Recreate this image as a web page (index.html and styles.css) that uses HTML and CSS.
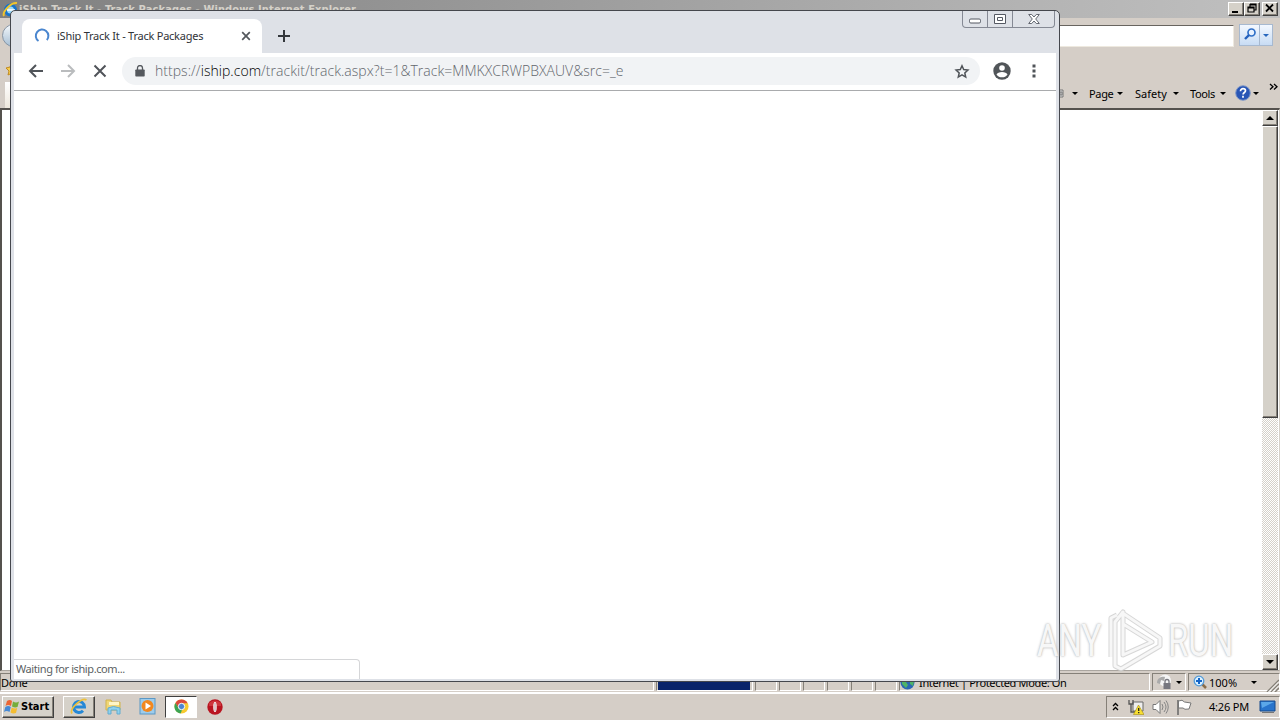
FILE: index.html
```html
<!DOCTYPE html>
<html lang="en">
<head>
  <meta charset="UTF-8" />
  <title>iShip Track It - Track Packages</title>
  <link rel="stylesheet" href="styles.css">
</head>
<body>
  <div class="desktop">

    <!-- Internet Explorer -->
    <div class="ie">
      <div class="ie-title">
        <svg class="ie-logo" width="17" height="17" viewBox="0 0 17 17"><circle cx="8.500" cy="9" r="5" fill="#9bd7f7" stroke="#1673cb" stroke-width="3"/><path d="M5 9h8" stroke="#fff" stroke-width="1.500"/><path d="M2 15C0 11 9 1 15 2" fill="none" stroke="#f0c52c" stroke-width="2"/></svg>
        <span class="ie-caption">iShip Track It - Track Packages - Windows Internet Explorer</span>
        <div class="classic-buttons">
          <span class="raised"><svg width="14" height="11" viewBox="0 0 14 11"><path d="M3 8h6v2H3z"/></svg></span>
          <span class="raised"><svg width="14" height="11" viewBox="0 0 14 11"><path d="M5 1h6v6H9M5 2h6M5 1v3M3 4h6v5H3zM3 5h6" fill="none" stroke="#000" stroke-width="1.2"/></svg></span>
          <span class="raised close"><svg width="14" height="11" viewBox="0 0 14 11"><path d="M3 1.500l7 7M10 1.500l-7 7" stroke="#000" stroke-width="1.8"/></svg></span>
        </div>
      </div>
      <div class="ie-nav">
        <span class="ie-back"></span>
        <span class="ie-address"></span>
        <div class="ie-search">
          <span><svg width="21" height="19" viewBox="0 0 21 19"><circle cx="11.500" cy="7.500" r="3.500" fill="#e8f2ff" stroke="#3070c8" stroke-width="1.700"/><path d="M9 10l-4 4" stroke="#2460bd" stroke-width="2.400"/></svg></span>
          <span><i class="caret blue"></i></span>
        </div>
      </div>
      <div class="ie-commands">
        <div class="ie-side">
          <svg width="12" height="14" viewBox="0 0 12 14"><path d="M7 1l2 4 4 0-3 4 1 4-4-2-4 2 1-4-3-3 4-1z" fill="#f7ce4d" stroke="#c18a20"/></svg>
          <span class="ie-tab"></span>
        </div>
        <div class="ie-menu">
          <svg class="printer" width="8" height="12" viewBox="0 0 8 12"><path d="M1 3h5v7H0M3 5h2v3H3z" fill="#ddd" stroke="#777"/></svg>
          <i class="caret"></i>
          <span class="item page-item">Page</span><i class="caret"></i>
          <span class="item safety">Safety</span><i class="caret"></i>
          <span class="item tools">Tools</span><i class="caret"></i>
          <svg class="help" width="16" height="16" viewBox="0 0 16 16"><circle cx="8" cy="8" r="7.300" fill="#2855b5" stroke="#8199c8"/><path d="M5.500 6.200c0-3.500 5-3 5-.4 0 1.800-2.400 1.700-2.400 3.700M8 10.800v2" fill="none" stroke="#fff" stroke-width="1.700"/></svg><i class="caret"></i>
          <svg class="more" width="9" height="8" viewBox="0 0 9 8"><path d="M1 1l3 2.700L1 6.500M5 1l3 2.700L5 6.500" fill="none" stroke="#000" stroke-width="1.300"/></svg>
        </div>
      </div>
      <div class="ie-view">
        <div class="ie-page"></div>
        <div class="scrollbar">
          <span class="raised arrow"><i class="tri up"></i></span>
          <span class="raised thumb"></span>
          <span class="track"></span>
          <span class="raised arrow"><i class="tri"></i></span>
        </div>
      </div>
      <div class="ie-status">
        <span class="pane done">Done</span>
        <span class="pane progress"><b></b></span>
        <span class="pane"></span>
        <span class="pane"></span>
        <span class="pane"></span>
        <span class="pane"></span>
        <span class="pane"></span>
        <span class="pane"></span>
        <span class="pane zone">
          <svg width="15" height="15" viewBox="0 0 15 15"><circle cx="7.500" cy="7.500" r="7" fill="#2b68b4"/><path d="M2 4l5-3 2 3-3 3 2 3-2 3-4-4zM10 5l4 1-1 5-3-2z" fill="#50b466"/></svg>
          <span>Internet | Protected Mode: On</span>
        </span>
        <span class="pane privacy">
          <svg width="19" height="16" viewBox="0 0 19 16"><circle cx="10" cy="6.500" r="6" fill="#f5f5f5"/><path d="M2 9c0-6 6-7 8-6l-1 4-3-1-1 4z" fill="#aaa"/><path d="M8.500 9h7v6h-7z" fill="#77777f"/><path d="M10 9V7.500a2 2 0 0 1 4 0V9" fill="none" stroke="#77777f" stroke-width="1.300"/></svg>
          <i class="caret"></i>
        </span>
        <span class="pane zoom">
          <svg width="14" height="15" viewBox="0 0 14 15"><path d="M9 9l4 4" stroke="#8b6c48" stroke-width="2.500"/><circle cx="6" cy="6" r="4.800" fill="#d9f0ff" stroke="#559bd7" stroke-width="1.300"/><path d="M6 3v6M3 6h6" stroke="#1565c8" stroke-width="2"/></svg>
          <span>100%</span>
          <i class="caret"></i>
          <svg class="grip" width="13" height="13" viewBox="0 0 13 13"><path d="M1 13L13 1M5 13l8-8M9 13l4-4" stroke="#858078" stroke-width="1.500"/><path d="M2.500 13L13 2.500M6.500 13L13 6.500" stroke="#fff"/></svg>
        </span>
      </div>
    </div>

    <!-- Chrome -->
    <div class="chrome">
      <div class="tabstrip">
        <div class="tab">
          <svg width="16" height="16" viewBox="0 0 16 16"><path d="M4.500 13A6.300 6.300 0 1 1 12.800 12" fill="none" stroke="#4a86cf" stroke-width="2"/></svg>
          <span class="tab-title">iShip Track It - Track Packages</span>
          <svg class="tab-close" width="10" height="10" viewBox="0 0 10 10"><path d="M1.200 1.200l7.600 7.600M8.800 1.200L1.200 8.800" stroke="#53575c" stroke-width="1.700"/></svg>
        </div>
        <svg class="new-tab" width="12" height="12" viewBox="0 0 12 12"><path d="M6 0v12M0 6h12" stroke="#34373c" stroke-width="2"/></svg>
        <div class="controls">
          <span class="min"><svg width="12" height="6" viewBox="0 0 12 6"><rect x=".5" y="1" width="11" height="4" rx="1.300" fill="#fff" stroke="#555963"/></svg></span>
          <span><svg width="12" height="10" viewBox="0 0 12 10"><path d="M.5.500h11v9H.500zM3.500 3.500h5v3h-5z" fill="#fff" stroke="#555963"/></svg></span>
          <span><svg width="12" height="10" viewBox="0 0 12 10"><path d="M.7.500h3L6 3 8.300.500h3L7.700 5l3.600 4.500h-3L6 7 3.700 9.500h-3L4.300 5z" fill="#fff" stroke="#555963" stroke-width=".9"/></svg></span>
        </div>
      </div>
      <div class="toolbar">
        <svg class="back" width="16" height="14" viewBox="0 0 16 14"><path d="M15 7H2M8 1L2 7l6 6" fill="none" stroke="#505459" stroke-width="2"/></svg>
        <svg class="forward" width="16" height="14" viewBox="0 0 16 14"><path d="M1 7h13M8 1l6 6-6 6" fill="none" stroke="#babcbe" stroke-width="2"/></svg>
        <svg class="stop" width="14" height="14" viewBox="0 0 14 14"><path d="M1.500 1.500l11 11M12.500 1.500l-11 11" stroke="#505459" stroke-width="2"/></svg>
        <div class="omnibox">
          <svg width="10" height="12" viewBox="0 0 10 12"><path d="M1 4.500h8q.7 0 .7.700v5.600q0 .7-.7.700H1q-.7 0-.7-.7V5.200q0-.7.700-.7z" fill="#55595e"/><path d="M2.500 5V3a2.500 2.500 0 0 1 5 0v2" fill="none" stroke="#55595e" stroke-width="1.300"/></svg>
          <div class="url"><span class="scheme">https://</span><span class="host">iship.com</span><span class="path">/trackit/track.aspx?t=1&amp;Track=MMKXCRWPBXAUV&amp;src=_e</span></div>
          <svg class="star" width="16" height="15" viewBox="0 0 16 15"><path d="M8 1.800l1.700 3.800 4.200.4L10.800 8.900l.9 4.200L8 10.900l-3.700 2.200.9-4.200L2.100 6l4.200-.4z" fill="none" stroke="#505459" stroke-width="1.500"/></svg>
        </div>
        <svg class="profile" width="18" height="18" viewBox="0 0 18 18"><circle cx="9" cy="9" r="8.700" fill="#515559"/><circle cx="9" cy="6" r="2.800" fill="#fff"/><path d="M3.500 12.500c1-3.500 10-3.500 11 0-2.500 3.800-8.500 3.800-11 0z" fill="#fff"/></svg>
        <svg class="dots" width="4" height="14" viewBox="0 0 4 14"><path d="M.5.500h3v3h-3zM.5 5.500h3v3h-3zM.5 10.500h3v3h-3z" fill="#505459"/></svg>
      </div>
      <div class="page">
        <div class="bubble"><span>Waiting for iship.com...</span></div>
      </div>
    </div>

    <div class="taskbar">
      <div class="start raised">
        <svg width="17" height="16" viewBox="0 0 17 16"><path d="M3 2q3-2 5 0L7 7Q4 5 1.500 7z" fill="#eb6534"/><path d="M9 2.500q3 2 6 0L13.500 8Q11 9 8 7.500z" fill="#75ad3b"/><path d="M1.300 8q3-2 5.500 0L5.500 13q-3-2-5.500 0z" fill="#4689d5"/><path d="M7.700 8.500q3 1.500 5.500.500L12 14q-3 1-5.500-.500z" fill="#f4bd32"/></svg>
        <span>Start</span>
      </div>
      <div class="task raised">
        <svg width="18" height="17" viewBox="0 0 18 17"><path d="M4 9h10.500A5.500 5.500 0 1 0 13 12.800" fill="none" stroke="#2588d6" stroke-width="3"/><path d="M2 15.500C-1 11 12-1 16.500 2" fill="none" stroke="#edc03c" stroke-width="1.700"/></svg>
      </div>
      <div class="task">
        <svg width="17" height="17" viewBox="0 0 17 17"><path d="M1 2h5l1 2h8v8H1z" fill="#efd677" stroke="#d1b34c"/><path d="M4 4h10v3H4z" fill="#fff6c6"/><path d="M3 16v-6q5-3 12 0v6h-3v-4H6v4z" fill="#8ed2ee" stroke="#63abd0"/></svg>
      </div>
      <div class="task">
        <svg width="17" height="17" viewBox="0 0 17 17"><rect x="1" y=".5" width="15" height="15.500" fill="#9dccec" stroke="#5b98c5"/><circle cx="8.500" cy="8" r="6" fill="#f18820"/><path d="M6.500 4.500l5.500 3.500-5.500 3.500z" fill="#fff"/></svg>
      </div>
      <div class="task active">
        <svg width="15" height="15" viewBox="0 0 16 16"><circle cx="8" cy="8" r="7.500" fill="#f7ca30"/><path d="M1.500 4.200A7.500 7.500 0 0 1 14.500 4.500H8L5 10z" fill="#dc4a3d"/><path d="M1.500 4.200L5.300 10 9 11 7 15.500A7.500 7.500 0 0 1 1.500 4.200z" fill="#3ca454"/><circle cx="8" cy="8" r="3.400" fill="#4d84d2" stroke="#fff"/></svg>
      </div>
      <div class="task">
        <svg width="16" height="16" viewBox="0 0 16 16"><circle cx="8" cy="8" r="7.700" fill="#b91420"/><path d="M2 4q6-5 12 0v3H2z" fill="#dc4d52" opacity=".6"/><ellipse cx="8" cy="8" rx="1.700" ry="5" fill="#fff"/><path d="M8 4v8" stroke="#b98f92"/></svg>
      </div>
      <div class="tray">
        <svg class="expand" width="7" height="10" viewBox="0 0 7 10"><path d="M1 4l2.500-2.500L6 4M1 8l2.500-2.500L6 8" fill="none" stroke="#000" stroke-width="1.300"/></svg>
        <svg class="network" width="16" height="16" viewBox="0 0 16 16"><path d="M5 3h10v9H5z" fill="#eee" stroke="#696969"/><path d="M1 1v4h4V1M3 5v8h4" fill="none" stroke="#555" stroke-width="1.300"/><path d="M10.500 6L16 15.500H5.500z" fill="#f8df31" stroke="#a58c15" stroke-width=".6"/><path d="M10.700 9v3M10.700 13v1.300" stroke="#222" stroke-width="1.300"/></svg>
        <svg class="sound" width="17" height="16" viewBox="0 0 17 16"><path d="M1 5.500h3l4-4v13l-4-4H1z" fill="#fff" stroke="#777"/><path d="M10 5q2 3 0 6M12 3q4 5 0 10M14 1.500q4.500 6.500 0 13" fill="none" stroke="#858585"/></svg>
        <svg class="flag" width="17" height="16" viewBox="0 0 17 16"><path d="M2 1v15" stroke="#666" stroke-width="1.500"/><path d="M2.500 2q4-2 6 1l6.500 1-2 6q-5 1-6-1H2.500z" fill="#fff" stroke="#777"/></svg>
        <span class="clock">4:26 PM</span>
        <svg class="show" width="17" height="14" viewBox="0 0 17 14"><path d="M1 1h15v10H1z" fill="#2874cc" stroke="#174b8c"/><path d="M2 2h13L3 8z" fill="#5ba7e9"/><path d="M3 12.500h12" stroke="#777"/></svg>
      </div>
    </div>

    <div class="watermark">
      <span class="any">ANY</span>
      <svg width="58" height="64" viewBox="0 0 58 64"><path d="M4 48V9l6-3M14 3l39 26v8L14 60l-6-3V13l8-10v43l29-13-29-18" fill="none" stroke="#cecece" stroke-width="5" stroke-linejoin="round"/><path d="M4 48V9l6-3M14 3l39 26v8L14 60l-6-3V13l8-10v43l29-13-29-18" fill="none" stroke="#f6f6f6" stroke-width="3" stroke-linejoin="round"/></svg>
      <span class="run">RUN</span>
    </div>
  </div>
</body>
</html>
```

FILE: styles.css
```css
* {
  box-sizing: border-box;
}
body {
  margin: 0;
  font-family: "Noto Sans", sans-serif;
  font-size: 11px;
  color: #000;
}
svg {
  display: block;
  flex: none;
}
.desktop {
  position: relative;
  width: 1280px;
  height: 720px;
  overflow: hidden;
  background: #d5cec7;
  display: flex;
  flex-direction: column;
}

/* shared classic widgets */
.raised {
  background: #d5d1c9;
  border: 1px solid;
  border-color: #fff #404040 #404040 #fff;
  box-shadow: inset -1px -1px #858078;
}
.caret {
  flex: none;
  border: 3px solid transparent;
  border-top-color: #000;
  border-bottom: 0;
}
.caret.blue {
  border-top-color: #2767bd;
}
.tri {
  border: 4px solid transparent;
  border-top-color: #000;
  border-bottom: 0;
}
.tri.up {
  border: 4px solid transparent;
  border-bottom-color: #000;
  border-top: 0;
}

/* internet explorer */
.ie {
  height: 693px;
  display: flex;
  flex-direction: column;
}
.ie-title {
  height: 18px;
  display: flex;
  align-items: center;
  padding: 0 2px;
  background: linear-gradient(90deg, #808080, #c0c0c0);
}
.ie-caption {
  flex: 1;
  font-weight: bold;
  font-family: "DejaVu Sans Condensed", "DejaVu Sans", sans-serif;
  font-stretch: condensed;
  font-size: 11px;
  letter-spacing: 0.12px;
  color: #d5d1c9;
}
.classic-buttons {
  display: flex;
}
.classic-buttons span {
  width: 16px;
  height: 14px;
}
.classic-buttons .close {
  margin-left: 2px;
}
.ie-nav {
  height: 34px;
  padding: 6px 7px 0 2px;
  display: flex;
}
.ie-back {
  width: 23px;
  height: 23px;
  border: 1px solid #8795a5;
  border-radius: 50%;
  background: linear-gradient(#f4f8fb, #a7bfd4);
}
.ie-address {
  flex: 1;
  height: 22px;
  margin: 1px 5px 0 0;
  background: #fff;
  border: 1px solid #eee9df;
  border-top-color: #68645f;
}
.ie-search {
  display: flex;
  width: 34px;
  height: 22px;
  border: 1px solid #a7b9d0;
  background: linear-gradient(#f3f8ff, #c8dcf4);
}
.ie-search span:first-child {
  width: 20px;
  border-right: 1px solid #a7b9d0;
}
.ie-search span:last-child {
  flex: 1;
  display: flex;
  align-items: center;
  justify-content: center;
}
.ie-commands {
  height: 56px;
  padding: 10px 4px 0 5px;
  display: flex;
  justify-content: space-between;
}
.ie-side {
  display: flex;
  flex-direction: column;
  justify-content: space-between;
}
.ie-tab {
  width: 60px;
  height: 26px;
  background: linear-gradient(#fff, #eee8dd);
}
.ie-menu {
  width: 219px;
  height: 22px;
  margin-top: 20px;
  display: flex;
  align-items: center;
}
.ie-menu .printer {
  margin-right: 7px;
}
.item {
  flex: none;
  margin-right: 5px;
  white-space: nowrap;
}
.page-item {
  width: 23px;
  margin-left: 11px;
  letter-spacing: -0.35px;
}
.safety {
  width: 33px;
  margin-left: 12px;
}
.tools {
  width: 25px;
  margin-left: 11px;
  letter-spacing: -0.35px;
}
.help {
  margin: 0 2px 0 9px;
}
.more {
  margin: -12px 0 0 10px;
}
.ie-view {
  height: 563px;
  display: flex;
  padding-right: 1px;
  border: 1px solid #d5d1c9;
  border-top: 2px solid #55524e;
  border-left: 2px solid #55524e;
  border-bottom-color: #aaa59f;
  background: #fff;
}
.ie-page {
  flex: 1;
}
.scrollbar {
  width: 16px;
  display: flex;
  flex-direction: column;
}
.arrow {
  height: 16px;
  display: flex;
  align-items: center;
  justify-content: center;
}
.thumb {
  height: 292px;
}
.track {
  flex: 1;
  background: repeating-conic-gradient(#d5d1c9 0 25%, #fff 0 50%) 0 0 / 2px 2px;
}
.ie-status {
  height: 22px;
  padding: 2px 0 1px;
  display: flex;
  gap: 2px;
  border-bottom: 1px solid #fff;
}
.pane {
  flex: none;
  width: 22px;
  border: 1px solid #fff;
  border-top-color: #858078;
  border-left-color: #858078;
  display: flex;
  align-items: center;
  white-space: nowrap;
}
.done {
  width: 654px;
  letter-spacing: -0.3px;
}
.progress {
  width: 97px;
  padding: 0 1px;
}
.progress b {
  width: 92px;
  height: 15px;
  background: #0a246a;
}
.zone {
  flex: 1;
  gap: 4px;
  letter-spacing: -0.35px;
}
.privacy {
  width: 34px;
  padding-left: 2px;
  gap: 2px;
}
.pane.zoom {
  width: 92px;
  padding-left: 4px;
}
.zoom > span {
  margin: 0 14px 0 2px;
}
.grip {
  margin: 6px 0 0 9px;
}

/* chrome window */
.chrome {
  position: absolute;
  left: 10px;
  top: 10px;
  width: 1050px;
  height: 672px;
  padding: 0 3px 2px;
  border: 1px solid #45474d;
  border-radius: 5px 5px 3px 3px;
  background: #dee1e7;
  display: flex;
  flex-direction: column;
}
.tabstrip {
  height: 42px;
  display: flex;
  padding-left: 8px;
}
.tab {
  width: 240px;
  height: 34px;
  margin-top: 8px;
  padding: 0 11px 0 12px;
  display: flex;
  align-items: center;
  border-radius: 8px 8px 0 0;
  background: #fff;
}
.tab-title {
  flex: 1;
  margin-left: 7px;
  padding-bottom: 2px;
  letter-spacing: -0.24px;
  color: #303338;
}
.new-tab {
  margin: 19px 0 0 16px;
}
.controls {
  display: flex;
  width: 93px;
  height: 17px;
  margin: 0 1px 0 auto;
  border: 1px solid #858994;
  border-top: 0;
  border-radius: 0 0 4px 4px;
}
.controls span {
  width: 25px;
  display: flex;
  align-items: center;
  justify-content: center;
  border-right: 1px solid #858994;
}
.controls .min {
  padding-top: 4px;
}
.controls span:last-child {
  flex: 1;
  border: 0;
}
.toolbar {
  height: 38px;
  display: flex;
  align-items: center;
  padding: 0 20px 1px 14px;
  background: #fff;
  border-bottom: 1px solid #a9abad;
}
.forward {
  margin-left: 16px;
}
.stop {
  margin-left: 17px;
}
.omnibox {
  flex: 1;
  height: 28px;
  margin: 0 13px 0 15px;
  padding: 0 10px 0 13px;
  display: flex;
  align-items: center;
  border-radius: 14px;
  background: #f1f3f5;
}
.url {
  flex: 1;
  margin-left: 10px;
  padding-bottom: 2px;
  font-family: "Open Sans", sans-serif;
  font-weight: 300;
  font-size: 14px;
  letter-spacing: 0.04px;
  white-space: nowrap;
  color: #62666c;
}
.host {
  color: #000;
}
.dots {
  margin-left: 21px;
}
.page {
  flex: 1;
  background: #fff;
  display: flex;
  align-items: flex-end;
}
.bubble {
  width: 346px;
  height: 20px;
  padding: 1px 2px;
  border: 1px solid #d5d6d8;
  border-width: 1px 1px 0 0;
  border-radius: 0 4px 0 0;
  letter-spacing: -0.41px;
  color: #5c5f63;
}

/* taskbar */
.taskbar {
  height: 27px;
  display: flex;
  align-items: center;
  padding: 0 0 1px 2px;
  border-top: 1px solid #fff;
}
.start {
  width: 52px;
  height: 22px;
  padding-left: 1px;
  display: flex;
  align-items: center;
  font-family: "DejaVu Sans Condensed", "DejaVu Sans", sans-serif;
  font-stretch: condensed;
  font-weight: bold;
  margin-right: 9px;
}
.task {
  width: 32px;
  height: 22px;
  margin-right: 2px;
  display: flex;
  align-items: center;
  justify-content: center;
}
.task.active {
  background: #fff;
  border: 1px solid #404040;
  border-color: #404040 #fff #fff #404040;
}
.tray {
  width: 174px;
  height: 22px;
  margin-left: auto;
  padding-left: 5px;
  display: flex;
  align-items: center;
  border: 1px solid #fff;
  border-top-color: #858078;
  border-left-color: #858078;
}
.network {
  margin-left: 9px;
}
.sound {
  margin-left: 8px;
}
.flag {
  margin-left: 7px;
}
.clock {
  width: 40px;
  margin: 0 10px 0 16px;
  letter-spacing: -0.2px;
  white-space: nowrap;
}

.watermark {
  position: absolute;
  left: 1037px;
  top: 609px;
  height: 64px;
  display: flex;
  align-items: center;
  font-family: Roboto, sans-serif;
  font-size: 44px;
  color: #f6f6f6;
  opacity: 0.8;
  text-shadow: 0 0 2px #aaa, 0 0 3px #bbb;
}
.watermark span {
  width: 70px;
  transform: scaleX(0.75);
  transform-origin: left;
}
.watermark .run {
  margin-left: 3px;
}
```
